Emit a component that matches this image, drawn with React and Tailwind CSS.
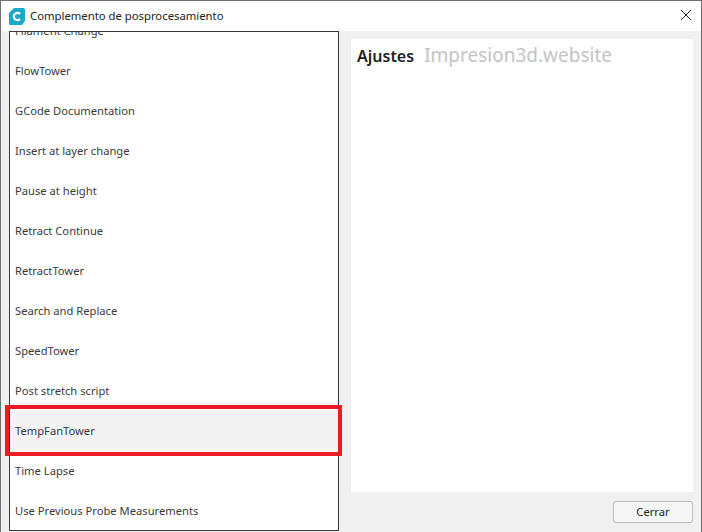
const items = ["Filament Change","FlowTower","GCode Documentation","Insert at layer change","Pause at height","Retract Continue","RetractTower","Search and Replace","SpeedTower","Post stretch script","TempFanTower","Time Lapse","Use Previous Probe Measurements"];

export default function App() {
  return (
    <div className="relative flex flex-col w-[702px] h-[532px] overflow-hidden bg-[#f0f0f0] border-t border-l border-r border-[#6f716a] font-['Noto_Sans',sans-serif] text-[#3a3a3a]">
      <div className="flex items-center h-[30px] bg-white shrink-0 pl-[8px] pr-[9px]">
        <svg width="16" height="17" viewBox="0 0 16 17" className="shrink-0">
          <path d="M5 0H14.5Q16 0 16 1.5V13L13 17H1.5Q0 17 0 15.5V5Z" fill="#1ba8c9" />
          <path d="M11 6A3.6 3.6 0 1 0 11 11" fill="none" stroke="#fff" strokeWidth="2.2" />
        </svg>
        <span className="ml-[5px] text-[11.3px] text-[#222]">Complemento de posprocesamiento</span>
        <svg width="12" height="12" viewBox="0 0 12 12" className="ml-auto -mt-[2px]" stroke="#222" strokeWidth="1"><path d="M1 1L11 11M11 1L1 11" /></svg>
      </div>
      <div className="flex flex-1 min-h-0 pl-[8px] pr-[8px] gap-[12px]">
        <div className="w-[330px] shrink-0 h-[500px] bg-white border border-[#3a3a3a] overflow-hidden">
          <div className="-mt-[21px]">
            {items.map((t) => (
              <div key={t} className={`h-[40px] flex items-center pl-[5px] text-[11.2px] ${t === "TempFanTower" ? "bg-[#f3f3f3]" : ""}`}>{t}</div>
            ))}
          </div>
        </div>
        <div className="flex flex-col flex-1 pt-[8px] min-w-0">
          <div className="h-[453px] bg-white pl-[6px] pt-[2px] flex items-baseline gap-[10px]">
            <span className="text-[16px] font-semibold text-[#222]">Ajustes</span>
            <span className="text-[19px] text-[#c4c4c4]">Impresion3d.website</span>
          </div>
          <div className="flex justify-end mt-[9px]">
            <button className="w-[80px] h-[22px] bg-[#f6f6f6] border border-[#bdbdbd] rounded-[3px] text-[11.2px] text-[#222]">Cerrar</button>
          </div>
        </div>
      </div>
      <div className="absolute left-[4px] top-[404px] w-[337px] h-[51px] border-[4px] border-[#ed1c24]" />
    </div>
  );
}
